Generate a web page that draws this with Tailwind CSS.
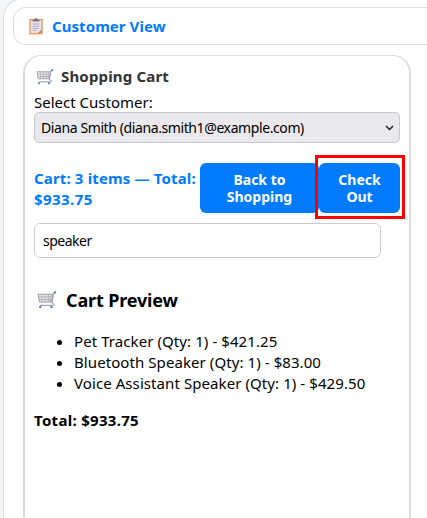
<!DOCTYPE html>
<html lang="en">
<head>
<meta charset="utf-8">
<title>Customer View</title>
<script src="https://cdn.jsdelivr.net/npm/@tailwindcss/browser@4"></script>
</head>
<body class="h-[518px] w-[427px] overflow-hidden bg-[#f4f5f7] font-['Noto_Sans','Open_Sans',sans-serif] text-[15px] leading-[21px] text-black">
<svg class="hidden">
  <symbol id="cart" viewBox="0 0 20 18">
    <path d="M1.2 3.2H16.2L14.7 11H2.4Z" fill="#eeeef0" stroke="#99979f" stroke-width="1"/>
    <path d="M4.6 3.2L5.2 11M8 3.2L8.2 11M11.4 3.2L11.2 11M14 3.2L13.4 11M1.6 5.9H15.6M2 8.5H15.2" fill="none" stroke="#a5a3aa" stroke-width=".8"/>
    <path d="M18.4 1.7L16.7 2.5L14.9 11.5L17 13.2Q17 14.4 15.6 14.4H3.2" fill="none" stroke="#aaa4b8" stroke-width="1.2"/>
    <path d="M17 1.9L18.9 .9" stroke="#3979cf" stroke-width="1.8"/>
    <circle cx="3.3" cy="15.9" r="1.2" fill="#4b7fce"/><circle cx="14.4" cy="15.9" r="1.2" fill="#4b7fce"/>
  </symbol>
</svg>
<main class="mt-[-2px] ml-[3px] h-[520px] w-[424px] overflow-hidden rounded-tl-[20px] border-t border-l border-[#ddd] bg-white pt-[8px] pl-[9px]">
  <header class="flex h-[38px] w-[414px] items-center rounded-l-[13px] border border-r-0 border-[#ddd] pl-[14px]">
    <svg class="mr-[8px] h-[18px] w-[16px] shrink-0" viewBox="0 0 16 18">
      <rect x="2" y="2.6" width="12" height="14" fill="#ebe6ee" stroke="#e29a62" stroke-width="1.4"/>
      <path d="M4.5 4.5V2.7H6.5Q6.7 1 8 1T9.5 2.7H11.5V4.5Z" fill="#77717d"/>
      <path d="M4.5 7H11.5M4.5 9.2H11.5M4.5 11.4H11M4.5 13.4H8.5" stroke="#aaa0b4" stroke-width=".9"/>
      <path d="M13.5 12.5L10 16H13.5Z" fill="#c47e60"/>
    </svg>
    <h1 class="pt-px text-[15px] font-bold tracking-[0.07px] whitespace-nowrap text-[#007bff]">Customer View</h1>
  </header>
  <section class="mt-[10px] ml-[10px] h-[464px] w-[388px] rounded-t-[18px] border-x-2 border-t border-[#ddd] pl-[9px]">
    <h2 class="flex h-[36px] items-center pt-[5px] text-[15px] font-bold tracking-[0.17px] text-[#333]"><svg class="mr-[7px] ml-[2px] h-[18px] w-[18px]"><use href="#cart"/></svg>Shopping Cart</h2>
    <div class="h-[20px] whitespace-nowrap">Select Customer:</div>
    <div class="flex h-[31px] w-[366px] items-center justify-between rounded-[5px] border border-[#c9c9ce] bg-[#e9e9ed] pr-[5px] pl-[6px] text-[14px] tracking-[-0.4px]"><span class="whitespace-nowrap">Diana Smith (diana.smith1@example.com)</span><svg class="h-[6px] w-[9px]" viewBox="0 0 9 6"><path d="M1 1L4.5 4.5L8 1" fill="none" stroke="#222" stroke-width="1.5"/></svg></div>
    <div class="mt-[20px] flex h-[50px] w-[366px] items-center">
      <div class="w-[166px] shrink-0 pt-px font-bold tracking-[0.15px] whitespace-nowrap text-[#007bff]">Cart: 3 items — Total:<br><span class="tracking-[0.45px]">$933.75</span></div>
      <button class="h-[50px] w-[119px] shrink-0 rounded-[6px] bg-[#007bff] text-[14px] leading-[17px] font-bold text-white">Back to<br>Shopping</button>
      <div class="relative h-[50px] w-[81px] shrink-0">
        <button class="h-[50px] w-[81px] rounded-[6px] bg-[#007bff] text-[14px] leading-[17px] font-bold text-white">Check<br>Out</button>
        <div class="absolute -top-[8px] -left-[4px] h-[64px] w-[90px] border-3 border-[#f00]"></div>
      </div>
    </div>
    <div class="mt-[10px] flex h-[35px] w-[347px] items-center rounded-[6px] border border-[#ccc] pl-[8px] text-[14px] tracking-[-0.5px]">speaker</div>
    <h3 class="mt-[28px] flex h-[28px] items-center text-[18px] font-bold tracking-[-0.15px]"><svg class="mr-[9px] ml-[3px] h-[18px] w-[20px]"><use href="#cart"/></svg>Cart Preview</h3>
    <ul class="mt-[17px] list-disc pl-[40px] tracking-[0.08px] whitespace-nowrap">
      <li>Pet Tracker (Qty: 1) - $421.25</li>
      <li>Bluetooth Speaker (Qty: 1) - $83.00</li>
      <li>Voice Assistant Speaker (Qty: 1) - $429.50</li>
    </ul>
    <p class="mt-[16px] font-bold tracking-[0.3px]">Total: $933.75</p>
  </section>
</main>
</body>
</html>
